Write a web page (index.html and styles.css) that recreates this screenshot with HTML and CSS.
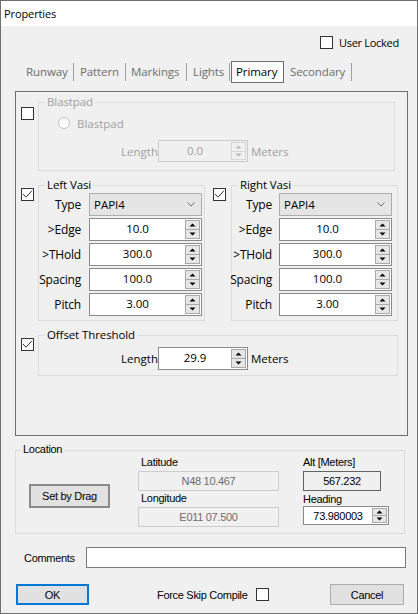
FILE: index.html
```html
<!DOCTYPE html>
<html>
<head>
<meta charset="utf-8">
<title>Properties</title>
<link rel="stylesheet" href="styles.css">
</head>
<body>
<div class="window">
  <div class="titlebar">Properties</div>
  <div class="client">
    <div class="lockrow">
      <span class="cb"></span><span class="cb-label">User Locked</span>
    </div>
    <div class="tabs">
      <span class="tab t1">Runway</span>
      <span class="tab t2">Pattern</span>
      <span class="tab t3">Markings</span>
      <span class="tab t4">Lights</span>
      <span class="tab sel">Primary</span>
      <span class="tab t6">Secondary</span>
    </div>

    <div class="panel">
      <div class="sec sec-blast">
        <span class="cb"></span>
        <div class="group g-blast disabled">
          <span class="legend">Blastpad</span>
          <div class="radio-row"><span class="radio"></span><span class="radio-label">Blastpad</span></div>
          <div class="len-row">
            <span class="len-label">Length</span>
            <div class="spin dis w90">
              <span class="val">0.0</span>
              <span class="arrows">
                <span class="arr"><svg width="7" height="4" viewBox="0 0 7 4"><polygon points="0.5,3.5 3.5,0.5 6.5,3.5" fill="#b8b8b8"/></svg></span>
                <span class="arr"><svg width="7" height="4" viewBox="0 0 7 4"><polygon points="0.5,0.5 3.5,3.5 6.5,0.5" fill="#b8b8b8"/></svg></span>
              </span>
            </div>
            <span class="unit">Meters</span>
          </div>
        </div>
      </div>

      <div class="vasi-row">
        <div class="sec sec-left">
          <span class="cb"><svg width="11" height="11" viewBox="0 0 11 11"><polyline points="1,5 4,8.2 10,1.8" fill="none" stroke="#333" stroke-width="1"/></svg></span>
          <div class="group g-vasi">
            <span class="legend">Left Vasi</span>
            <div class="vgrid vgrid-left">
              <span class="vl">Type</span>
              <div class="combo"><span class="ctext">PAPI4</span><svg width="8" height="5" viewBox="0 0 8 5"><polyline points="0.5,0.5 4,4 7.5,0.5" fill="none" stroke="#707070" stroke-width="1"/></svg></div>
              <span class="vl">&gt;Edge</span>
              <div class="spin"><span class="val">10.0</span><span class="arrows"><span class="arr"><svg width="7" height="4" viewBox="0 0 7 4"><polygon points="0.5,3.5 3.5,0.5 6.5,3.5" fill="#000"/></svg></span><span class="arr"><svg width="7" height="4" viewBox="0 0 7 4"><polygon points="0.5,0.5 3.5,3.5 6.5,0.5" fill="#000"/></svg></span></span></div>
              <span class="vl">&gt;THold</span>
              <div class="spin"><span class="val">300.0</span><span class="arrows"><span class="arr"><svg width="7" height="4" viewBox="0 0 7 4"><polygon points="0.5,3.5 3.5,0.5 6.5,3.5" fill="#000"/></svg></span><span class="arr"><svg width="7" height="4" viewBox="0 0 7 4"><polygon points="0.5,0.5 3.5,3.5 6.5,0.5" fill="#000"/></svg></span></span></div>
              <span class="vl">Spacing</span>
              <div class="spin"><span class="val">100.0</span><span class="arrows"><span class="arr"><svg width="7" height="4" viewBox="0 0 7 4"><polygon points="0.5,3.5 3.5,0.5 6.5,3.5" fill="#000"/></svg></span><span class="arr"><svg width="7" height="4" viewBox="0 0 7 4"><polygon points="0.5,0.5 3.5,3.5 6.5,0.5" fill="#000"/></svg></span></span></div>
              <span class="vl">Pitch</span>
              <div class="spin"><span class="val">3.00</span><span class="arrows"><span class="arr"><svg width="7" height="4" viewBox="0 0 7 4"><polygon points="0.5,3.5 3.5,0.5 6.5,3.5" fill="#000"/></svg></span><span class="arr"><svg width="7" height="4" viewBox="0 0 7 4"><polygon points="0.5,0.5 3.5,3.5 6.5,0.5" fill="#000"/></svg></span></span></div>
            </div>
          </div>
        </div>
        <div class="sec sec-right">
          <span class="cb"><svg width="11" height="11" viewBox="0 0 11 11"><polyline points="1,5 4,8.2 10,1.8" fill="none" stroke="#333" stroke-width="1"/></svg></span>
          <div class="group g-vasi">
            <span class="legend">Right Vasi</span>
            <div class="vgrid vgrid-right">
              <span class="vl">Type</span>
              <div class="combo"><span class="ctext">PAPI4</span><svg width="8" height="5" viewBox="0 0 8 5"><polyline points="0.5,0.5 4,4 7.5,0.5" fill="none" stroke="#707070" stroke-width="1"/></svg></div>
              <span class="vl">&gt;Edge</span>
              <div class="spin"><span class="val">10.0</span><span class="arrows"><span class="arr"><svg width="7" height="4" viewBox="0 0 7 4"><polygon points="0.5,3.5 3.5,0.5 6.5,3.5" fill="#000"/></svg></span><span class="arr"><svg width="7" height="4" viewBox="0 0 7 4"><polygon points="0.5,0.5 3.5,3.5 6.5,0.5" fill="#000"/></svg></span></span></div>
              <span class="vl">&gt;THold</span>
              <div class="spin"><span class="val">300.0</span><span class="arrows"><span class="arr"><svg width="7" height="4" viewBox="0 0 7 4"><polygon points="0.5,3.5 3.5,0.5 6.5,3.5" fill="#000"/></svg></span><span class="arr"><svg width="7" height="4" viewBox="0 0 7 4"><polygon points="0.5,0.5 3.5,3.5 6.5,0.5" fill="#000"/></svg></span></span></div>
              <span class="vl">Spacing</span>
              <div class="spin"><span class="val">100.0</span><span class="arrows"><span class="arr"><svg width="7" height="4" viewBox="0 0 7 4"><polygon points="0.5,3.5 3.5,0.5 6.5,3.5" fill="#000"/></svg></span><span class="arr"><svg width="7" height="4" viewBox="0 0 7 4"><polygon points="0.5,0.5 3.5,3.5 6.5,0.5" fill="#000"/></svg></span></span></div>
              <span class="vl">Pitch</span>
              <div class="spin"><span class="val">3.00</span><span class="arrows"><span class="arr"><svg width="7" height="4" viewBox="0 0 7 4"><polygon points="0.5,3.5 3.5,0.5 6.5,3.5" fill="#000"/></svg></span><span class="arr"><svg width="7" height="4" viewBox="0 0 7 4"><polygon points="0.5,0.5 3.5,3.5 6.5,0.5" fill="#000"/></svg></span></span></div>
            </div>
          </div>
        </div>
      </div>

      <div class="sec sec-offset">
        <span class="cb"><svg width="11" height="11" viewBox="0 0 11 11"><polyline points="1,5 4,8.2 10,1.8" fill="none" stroke="#333" stroke-width="1"/></svg></span>
        <div class="group g-offset">
          <span class="legend">Offset Threshold</span>
          <div class="len-row off-row">
            <span class="len-label">Length</span>
            <div class="spin w90 h23">
              <span class="val">29.9</span>
              <span class="arrows"><span class="arr"><svg width="7" height="4" viewBox="0 0 7 4"><polygon points="0.5,3.5 3.5,0.5 6.5,3.5" fill="#000"/></svg></span><span class="arr"><svg width="7" height="4" viewBox="0 0 7 4"><polygon points="0.5,0.5 3.5,3.5 6.5,0.5" fill="#000"/></svg></span></span>
            </div>
            <span class="unit en">Meters</span>
          </div>
        </div>
      </div>
    </div>

    <div class="group location">
      <span class="legend">Location</span>
      <div class="loc-inner">
        <span class="btn drag">Set by Drag</span>
        <div class="loc-col latcol">
          <span class="loc-label">Latitude</span>
          <span class="ro dis-box">N48 10.467</span>
          <span class="loc-label lon">Longitude</span>
          <span class="ro dis-box">E011 07.500</span>
        </div>
        <div class="loc-col altcol">
          <span class="loc-label nopad">Alt [Meters]</span>
          <span class="ro alt-box">567.232</span>
          <span class="loc-label nopad hd">Heading</span>
          <div class="spin hspin">
            <span class="val">73.980003</span>
            <span class="arrows"><span class="arr"><svg width="7" height="4" viewBox="0 0 7 4"><polygon points="0.5,3.5 3.5,0.5 6.5,3.5" fill="#000"/></svg></span><span class="arr"><svg width="7" height="4" viewBox="0 0 7 4"><polygon points="0.5,0.5 3.5,3.5 6.5,0.5" fill="#000"/></svg></span></span>
          </div>
        </div>
      </div>
    </div>

    <div class="comments">
      <span class="c-label">Comments</span>
      <span class="c-input"></span>
    </div>

    <div class="buttons">
      <span class="btn ok">OK</span>
      <span class="force">Force Skip Compile</span>
      <span class="cb force-cb"></span>
      <span class="btn cancel">Cancel</span>
    </div>
  </div>
</div>
</body>
</html>
```

FILE: styles.css
```css
html, body {
  margin: 0;
  padding: 0;
  background: #ffffff;
}

.window {
  width: 418px;
  height: 614px;
  box-sizing: border-box;
  border: 1px solid #6f6f6f;
  display: flex;
  flex-direction: column;
  font-family: "Open Sans", "Noto Sans", sans-serif;
  font-size: 11.5px;
  color: #000;
}

.titlebar {
  height: 25px;
  line-height: 25px;
  padding-left: 3px;
  background: #ffffff;
  font-size: 11px;
  letter-spacing: -0.1px;
}

.client {
  flex: 1;
  background: #f0f0f0;
  display: flex;
  flex-direction: column;
}

/* checkbox */
.cb {
  width: 13px;
  height: 13px;
  box-sizing: border-box;
  border: 1px solid #333333;
  background: #ffffff;
  display: inline-flex;
  flex: none;
}

.lockrow {
  display: flex;
  align-items: center;
  height: 13px;
  margin: 10px 0 0 319px;
}

.cb-label {
  margin-left: 6px;
  line-height: 13px;
  font-size: 11px;
  letter-spacing: -0.3px;
}

/* tabs */
.tabs {
  display: flex;
  height: 22px;
  margin: 12px 0 0 19px;
}

.tab {
  box-sizing: border-box;
  height: 18px;
  margin-top: 2px;
  line-height: 18px;
  padding-left: 6px;
  border-right: 1px solid #a0a0a0;
  color: #6d6d6d;
  white-space: nowrap;
  letter-spacing: -0.1px;
}

.t1 { width: 54px; }
.t2 { width: 52px; }
.t3 { width: 61px; padding-left: 5px; }
.t4 { width: 43px; }
.t6 { width: 68px; }

.tab.sel {
  width: 53px;
  height: 22px;
  margin: 0 0 0 1px;
  line-height: 20px;
  padding-left: 4px;
  border: 1px solid #6e6e6e;
  background: #ffffff;
  color: #000;
}

/* main panel */
.panel {
  box-sizing: border-box;
  width: 393px;
  height: 345px;
  margin: 8px 0 0 14px;
  border: 1px solid #6e6e6e;
}

.sec {
  display: flex;
  align-items: flex-start;
}

.sec > .cb {
  margin-top: 3px;
  margin-right: 4px;
}

.sec-blast {
  margin-top: 10px;
  padding-left: 5px;
}

.sec-blast > .cb {
  margin-top: 5px;
}

.group {
  position: relative;
  box-sizing: border-box;
  border: 1px solid #dcdcdc;
}

.legend {
  position: absolute;
  top: -9px;
  left: 6px;
  padding: 0 2px;
  line-height: 15px;
  background: #f0f0f0;
  white-space: nowrap;
  letter-spacing: -0.1px;
}

.disabled {
  color: #a0a0a0;
}

.g-blast {
  width: 357px;
  height: 69px;
}

.radio-row {
  display: flex;
  align-items: center;
  height: 12px;
  margin: 14px 0 0 19px;
}

.radio {
  width: 12px;
  height: 12px;
  box-sizing: border-box;
  border: 1px solid #c4c4c4;
  border-radius: 50%;
  background: #fbfbfb;
}

.radio-label {
  margin-left: 7px;
}

.len-row {
  display: flex;
  align-items: center;
  margin-top: 11px;
}

.len-label {
  width: 119px;
  text-align: right;
}

.unit {
  margin-left: 3px;
}

.en { color: #000; }

/* spin box */
.spin {
  display: flex;
  box-sizing: border-box;
  height: 23px;
  border: 1px solid #8a8a8a;
  background: #ffffff;
}

.spin .val {
  flex: 1;
  display: flex;
  align-items: center;
  justify-content: center;
  padding-bottom: 2px;
}

.arrows {
  display: flex;
  flex-direction: column;
  width: 15px;
  margin: 1px 1px 1px 0;
  box-sizing: border-box;
  border: 1px solid #a9a9a9;
}

.arr {
  flex: 1;
  display: flex;
  align-items: center;
  justify-content: center;
  background: #e6e6e6;
}

.arr + .arr {
  border-top: 1px solid #a9a9a9;
}

.w90 {
  width: 90px;
  height: 22px;
}

.h23 { height: 23px; }

.spin.dis {
  border-color: #cccccc;
  background: #f0f0f0;
  color: #a0a0a0;
}

.spin.dis .arrows {
  border-color: #d6d6d6;
}

.spin.dis .arr {
  background: #f0f0f0;
}

.spin.dis .arr + .arr {
  border-top-color: #d6d6d6;
}

/* vasi */
.vasi-row {
  display: flex;
  margin-top: 14px;
}

.sec-left {
  padding-left: 5px;
}

.sec-right {
  margin-left: 8px;
}

.sec-right > .cb {
  margin-right: 5px;
}

.g-vasi {
  width: 167px;
  height: 136px;
}

.vgrid {
  display: grid;
  grid-auto-rows: 23px;
  row-gap: 2px;
  padding-top: 7px;
}

.vgrid-left {
  grid-template-columns: 42px 113px;
  column-gap: 8px;
}

.vgrid-right {
  grid-template-columns: 40px 113px;
  column-gap: 7px;
}

.vl {
  display: flex;
  align-items: center;
  justify-content: flex-end;
  font-size: 12px;
  letter-spacing: -0.2px;
  white-space: nowrap;
  padding-bottom: 1px;
}

.combo {
  display: flex;
  align-items: center;
  justify-content: space-between;
  box-sizing: border-box;
  border: 1px solid #adadad;
  background: #e5e5e5;
  padding: 0 6px 0 4px;
}

.ctext {
  padding-bottom: 1px;
}

/* offset */
.sec-offset {
  margin-top: 14px;
  padding-left: 5px;
}

.g-offset {
  width: 360px;
  height: 41px;
}

.off-row {
  margin-top: 11px;
}

/* location */
.location {
  width: 390px;
  height: 84px;
  margin: 14px 0 0 14px;
  font-family: "Liberation Sans", Arial, sans-serif;
  font-size: 11px;
  letter-spacing: -0.3px;
}

.location .legend {
  left: 5px;
  letter-spacing: -0.3px;
}

.loc-inner {
  display: flex;
  align-items: flex-start;
}

.btn {
  display: flex;
  align-items: center;
  justify-content: center;
  box-sizing: border-box;
  background: #e1e1e1;
  font-family: "Liberation Sans", Arial, sans-serif;
  font-size: 11px;
  letter-spacing: -0.3px;
}

.drag {
  width: 81px;
  height: 24px;
  margin: 33px 0 0 13px;
  border: 2px solid #8a8a8a;
}

.loc-col {
  display: flex;
  flex-direction: column;
  padding-top: 5px;
}

.latcol {
  width: 141px;
  margin-left: 28px;
}

.altcol {
  width: 86px;
  margin-left: 24px;
}

.loc-label {
  line-height: 12px;
  padding-left: 3px;
}

.loc-label.nopad {
  padding-left: 0;
}

.ro {
  display: flex;
  align-items: center;
  justify-content: center;
  box-sizing: border-box;
  height: 20px;
  margin-top: 3px;
}

.dis-box {
  border: 1px solid #cccccc;
  color: #6d6d6d;
}

.lon {
  margin-top: 1px;
}

.alt-box {
  width: 78px;
  border: 1px solid #646464;
}

.hd {
  margin-top: 2px;
}

.hspin {
  height: 19px;
  margin-top: 1px;
  width: 86px;
}

.hspin .val {
  padding-bottom: 0;
}

/* comments */
.comments {
  display: flex;
  align-items: center;
  height: 21px;
  margin: 13px 0 0 23px;
  font-family: "Liberation Sans", Arial, sans-serif;
  font-size: 11px;
  letter-spacing: -0.3px;
}

.c-label {
  width: 62px;
}

.c-input {
  box-sizing: border-box;
  width: 320px;
  height: 21px;
  border: 1px solid #7a7a7a;
  background: #ffffff;
}

/* buttons */
.buttons {
  display: flex;
  align-items: center;
  height: 21px;
  margin: 16px 13px 0 15px;
  font-family: "Liberation Sans", Arial, sans-serif;
  font-size: 11px;
  letter-spacing: -0.3px;
}

.ok {
  width: 73px;
  height: 21px;
  border: 2px solid #0078d7;
}

.force {
  margin-left: 68px;
  width: 90px;
  white-space: nowrap;
}

.force-cb {
  margin-left: 9px;
}

.cancel {
  width: 74px;
  height: 21px;
  margin-left: auto;
  border: 1px solid #adadad;
}
```
